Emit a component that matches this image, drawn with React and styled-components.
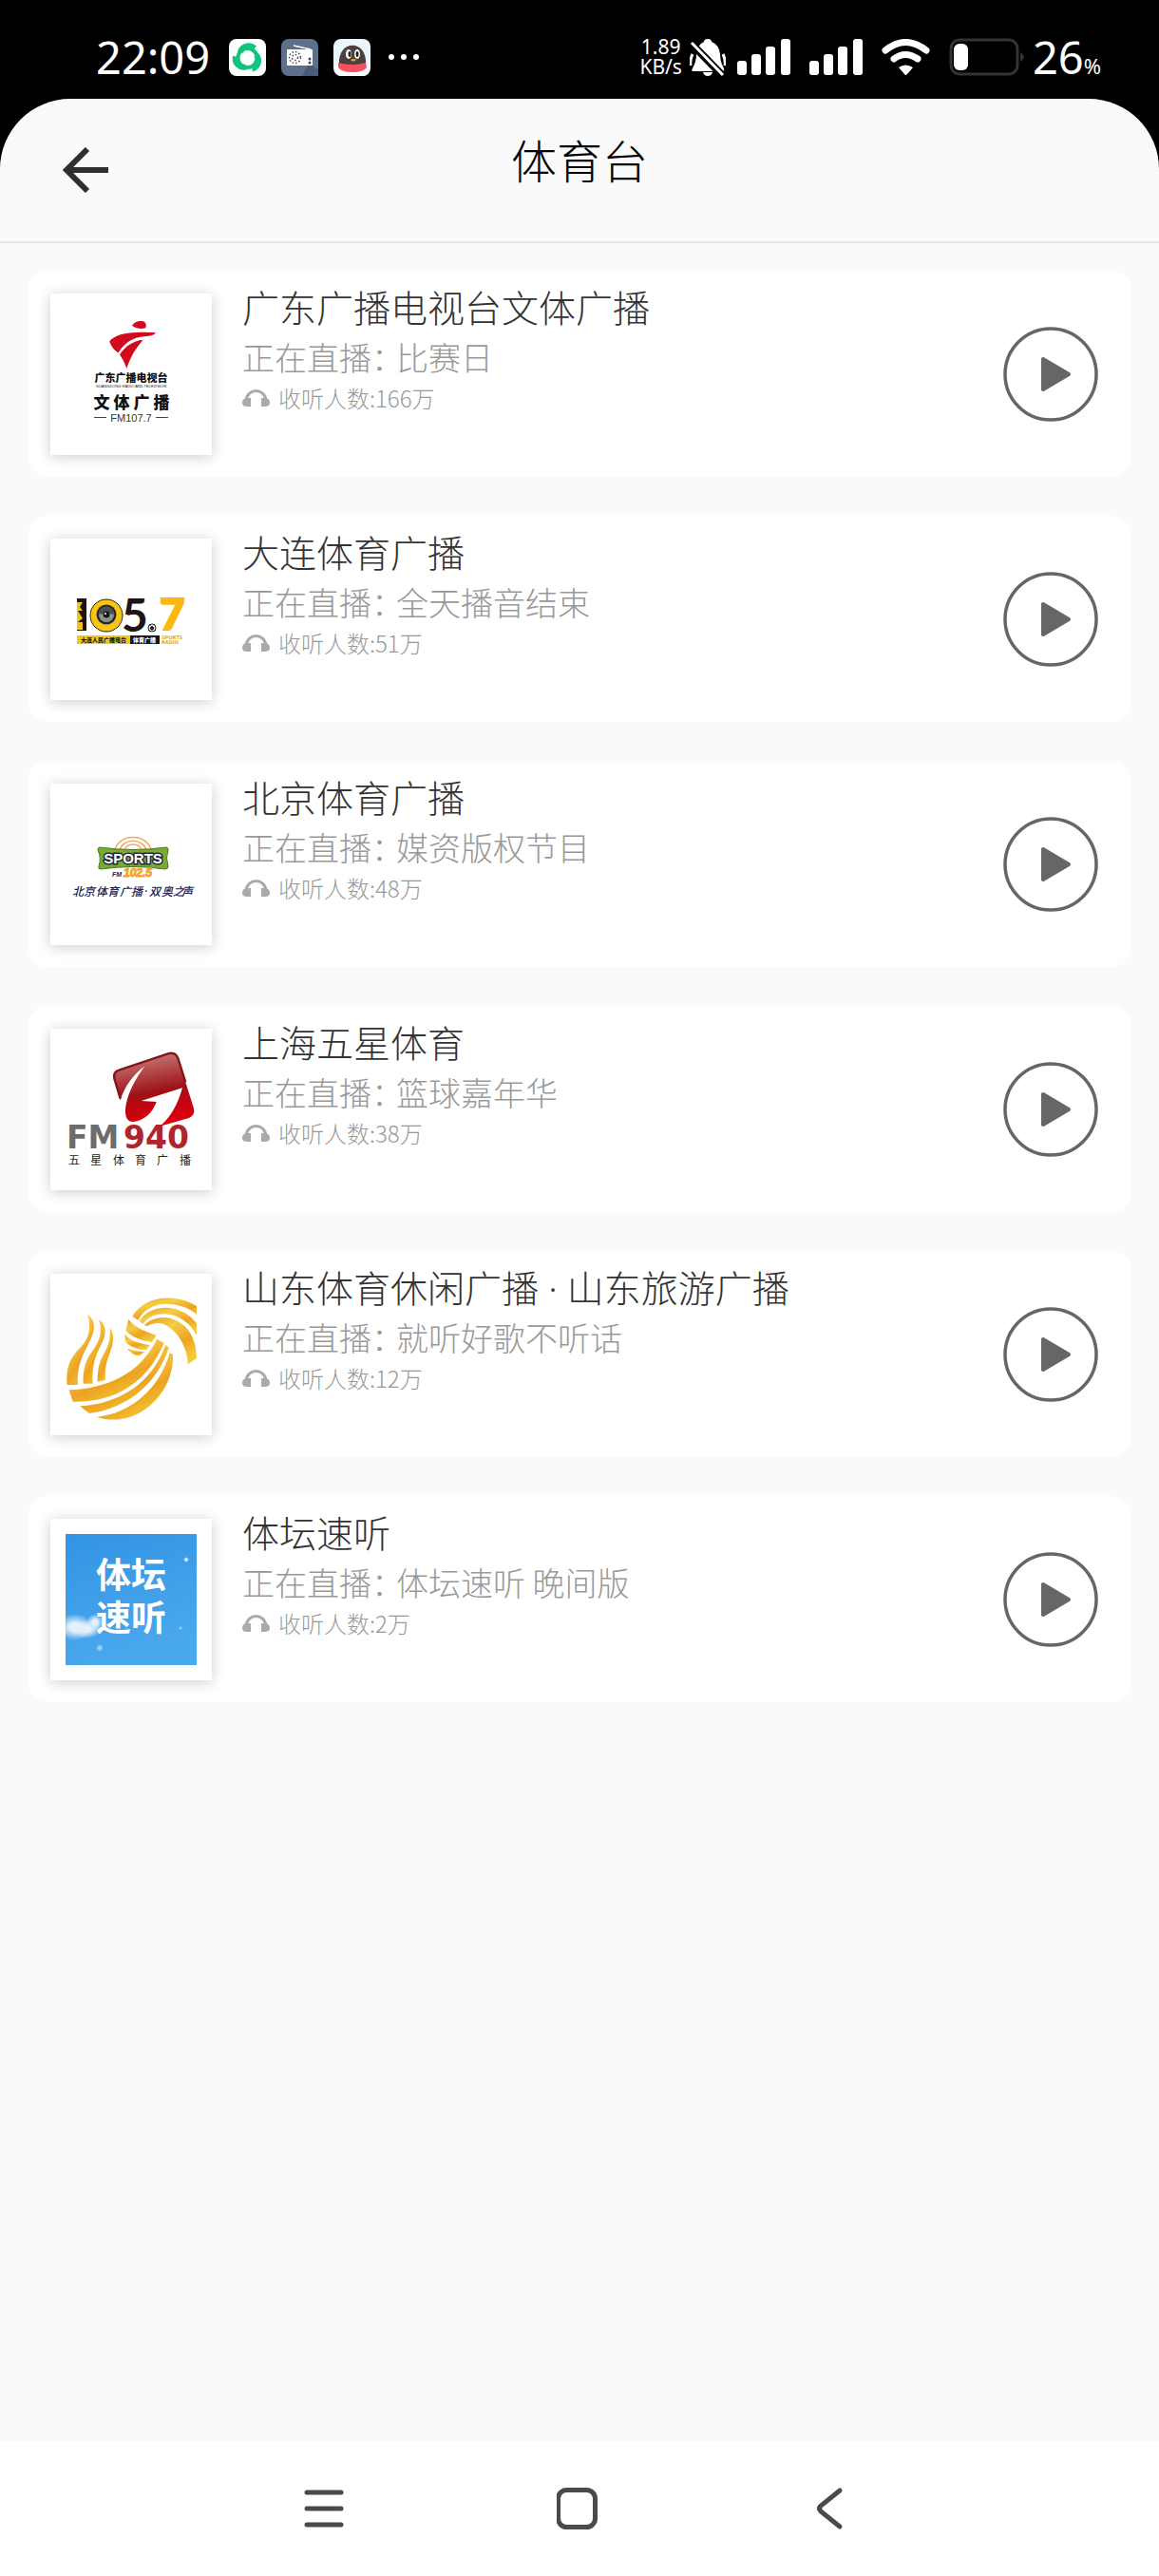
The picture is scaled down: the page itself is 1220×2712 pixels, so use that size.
import React from 'react';
import styled, { createGlobalStyle } from 'styled-components';

const CJK = "'Noto Sans CJK SC', sans-serif";

const GuangdongLogo = () => (
  <svg viewBox="0 0 170 170">
    <g transform="translate(-23 -19) scale(0.3333)" fill="#d20a1e">
      <path d="M327,158 C334,146 350,141 362,145 C371,148 374,158 369,166 C356,170 340,168 327,158Z" />
      <path d="M256,208 C272,186 318,174 402,181 C398,188 386,192 366,193 C330,196 304,212 284,244 C272,238 260,224 256,208Z" />
      <path d="M362,203 C340,228 322,256 310,294 C304,276 296,262 288,250 C306,222 332,206 362,203Z" />
    </g>
    <g fill="#111" textAnchor="middle">
      <text x="85" y="93" fontSize="11" fontWeight="900">广东广播电视台</text>
      <text x="85" y="99" fontSize="4" fontFamily="Liberation Sans">GUANGDONG RADIO AND TELEVISION</text>
      <text x="54 75 96 117" y="121" fontSize="17" fontWeight="900">文体广播</text>
      <text x="85" y="135" fontSize="11" fontFamily="Liberation Sans" fill="#333">FM107.7</text>
    </g>
    <path d="M46,130.500H59M111,130.500H124" stroke="#444" />
  </svg>
);

const DalianLogo = () => (
  <svg viewBox="0 0 170 170">
    <rect x="28" y="63" width="10" height="34" fill="#1d1515" />
    <path d="M28,67H34L31,72L34,76H29L34,84L29,88H34V96H28Z" fill="#f2c318" />
    <circle cx="59" cy="81" r="17" fill="#f7c613" stroke="#2a2015" />
    <circle cx="59" cy="80" r="10.500" fill="#2b2b2b" />
    <circle cx="59" cy="80" r="8" fill="#8d9293" />
    <path d="M51,80A8,8 0 0 1 67,80L59,78Z" fill="#4b4f50" />
    <circle cx="59" cy="80" r="3.500" fill="#17181a" />
    <circle cx="58" cy="79" r="1" fill="#fff" />
    <text x="75" y="98" fontSize="48" fontWeight="700" fontFamily="Lato" fill="#1d1515">5</text>
    <circle cx="107" cy="94" r="4" fill="#fff" stroke="#222" />
    <path d="M107,92L109,94L108,96H106L105,94ZM104,91L106,91M110,91L108,90M103,96L105,98M111,96L109,98" fill="#222" stroke="#222" />
    <text x="115" y="96" fontSize="46" fontWeight="900" fontFamily="Lato" fill="#fbb80f" stroke="#fbb80f" strokeWidth="2">7</text>
    <rect x="28" y="102" width="56" height="9" fill="#f4c51c" />
    <rect x="84" y="102" width="31" height="9" fill="#1d1515" />
    <g fontWeight="900" fontSize="6">
      <text x="32" y="109" fill="#1d1515">大连人民广播电台</text>
      <text x="87" y="109" fill="#fff">体育广播</text>
    </g>
    <g fontWeight="700" fontSize="5" fontFamily="DejaVu Sans" fill="#d4ac22">
      <text x="117" y="106">SPORTS</text>
      <text x="117" y="111">RADIO</text>
    </g>
  </svg>
);

const BeijingLogo = () => (
  <svg viewBox="0 0 170 170">
    <g fill="none" stroke="#efaa5b">
      <path d="M68,70C72,52 102,52 106,70" strokeWidth="1.500" />
      <path d="M73,70C77,57 97,57 101,70" strokeWidth="1.500" />
      <path d="M78,70C81,62 93,62 96,70" strokeWidth="1.500" />
    </g>
    <path d="M52,67Q87,72 122,67Q124,67 124,70Q121,78 124,87Q124,90 121,90Q87,85 53,90Q50,90 51,87Q54,78 50,70Q50,67 52,67Z" fill="#78ab2f" stroke="#4f7224" />
    <text x="87" y="84" fontSize="15" fontWeight="700" fontFamily="Liberation Sans" textAnchor="middle" fill="#fff" stroke="#232a42" strokeWidth="3" paintOrder="stroke">SPORTS</text>
    <text x="65" y="98" fontSize="7" fontWeight="700" fontStyle="italic" fontFamily="Liberation Sans" fill="#2a2150">FM</text>
    <text x="77" y="98" fontSize="12" fontWeight="700" fontStyle="italic" fontFamily="Liberation Sans" fill="#f4a42c" stroke="#f4a42c">102.5</text>
    <text x="23 35 48 60 73 85 99 104 117 129 138" y="118" fontSize="12" fontStyle="italic" fontWeight="500" fontFamily="Noto Sans, Noto Sans CJK SC" fill="#25224f">北京体育广播·双奥之声</text>
  </svg>
);

const ShanghaiLogo = () => (
  <svg viewBox="0 0 170 170">
    <defs>
      <linearGradient id="fiveStar" x1="0.3" y1="0" x2="0.5" y2="1">
        <stop offset="0" stopColor="#c98080" />
        <stop offset="0.550" stopColor="#9d1216" />
        <stop offset="0.700" stopColor="#c00410" />
        <stop offset="1" stopColor="#dd0012" />
      </linearGradient>
    </defs>
    <g transform="translate(-23 -17) scale(0.3333)">
      <path
        d="M288,180 L440,129 Q464,122 472,144 L522,302 Q527,324 507,333 L415,359 C448,332 472,290 486,238 L356,279 L404,282 C392,318 362,342 332,345 C314,346 305,334 306,306 C310,262 334,214 367,169 C330,198 304,232 290,277 L270,208 Q265,187 288,180Z"
        fill="url(#fiveStar)"
      />
      <path d="M290,272 L271,208 Q266,187 288,181 L440,130 Q464,123 472,144 L496,220" fill="none" stroke="#82141a" strokeWidth="7" />
    </g>
    <g fontFamily="DejaVu Sans" fontSize="33" fontWeight="700">
      <text x="17" y="126" fill="#6d6d6d">FM</text>
      <text x="77" y="126" fill="#b0242e">940</text>
    </g>
    <text x="19 42 66 89 112 136" y="143" fontSize="12" fontWeight="400" fill="#222">五星体育广播</text>
  </svg>
);

const ShandongLogo = () => (
  <svg viewBox="0 0 170 170">
    <defs>
      <linearGradient id="gold" x1="0" y1="0" x2="0.6" y2="1">
        <stop offset="0" stopColor="#e79a1f" />
        <stop offset="0.350" stopColor="#f6cd45" />
        <stop offset="0.700" stopColor="#eda322" />
        <stop offset="1" stopColor="#f3ca35" />
      </linearGradient>
    </defs>
    <g transform="translate(-23 -17) scale(0.3333)" fill="url(#gold)">
      <path d="M187,180 C200,190 208,202 207,222 C203,270 150,310 156,402 L122,402 C117,350 130,318 165,283 C190,256 200,225 187,180Z" />
      <path d="M222,195 C240,208 246,225 240,250 C230,285 198,312 203,398 L173,398 C172,350 180,322 205,290 C226,262 234,232 222,195Z" />
      <path d="M257,222 C268,237 270,256 264,280 C255,312 240,330 243,386 L218,392 C217,350 225,325 240,300 C255,275 260,250 257,222Z" />
      <path d="M128,418 C240,414 350,372 406,257 L428,270 C375,395 275,458 140,455 Z" />
      <path d="M433,276 L443,284 C410,390 320,475 192,492 L162,469 C290,462 390,395 433,276Z" />
      <path d="M446,300 L456,306 C458,370 430,430 380,470 C330,512 270,520 215,504 C330,490 415,410 446,300Z" />
      <path d="M316,195 C335,220 370,235 403,245 L390,267 C355,262 325,250 307,230 Z" />
      <path d="M304,243 C320,262 350,272 383,276 L372,291 C345,292 318,280 307,266Z" />
      <path d="M312,287 C330,293 345,296 366,298 L352,310 C338,310 322,302 312,287Z" />
      <path d="M328,186 C350,145 400,125 450,128 C485,130 510,140 531,153 L531,180 C500,150 440,138 400,152 C375,160 357,175 347,198 Z" />
      <path d="M350,200 C370,170 400,157 440,158 C480,162 510,180 531,208 L531,245 C510,205 470,178 430,178 C400,178 375,190 362,210 Z" />
      <path d="M366,213 C385,195 410,187 440,190 C490,200 530,240 531,318 L504,336 C500,280 470,225 420,208 C400,205 385,210 375,217Z" />
    </g>
  </svg>
);

const TitanLogo = () => (
  <svg viewBox="0 0 170 170">
    <defs>
      <linearGradient id="sky" x1="0" y1="0" x2="0.3" y2="1">
        <stop offset="0" stopColor="#3294e4" />
        <stop offset="1" stopColor="#4aa8ec" />
      </linearGradient>
      <radialGradient id="puff">
        <stop offset="0.300" stopColor="#e4f1fb" />
        <stop offset="1" stopColor="#e4f1fb" stopOpacity="0" />
      </radialGradient>
      <clipPath id="skyBox">
        <rect x="16" y="16" width="138" height="138" />
      </clipPath>
    </defs>
    <rect x="16" y="16" width="138" height="138" fill="url(#sky)" />
    <g clipPath="url(#skyBox)" fill="url(#puff)">
      <ellipse cx="26" cy="114" rx="19" ry="14" />
      <ellipse cx="38" cy="116" rx="16" ry="10" />
      <ellipse cx="47" cy="109" rx="9" ry="9" />
      <circle cx="52" cy="136" r="4" opacity="0.6" />
      <circle cx="143" cy="43" r="3" />
      <circle cx="137" cy="115" r="2" opacity="0.6" />
    </g>
    <g fontSize="37" fontWeight="700" fill="#fff">
      <text x="48" y="73">体坛</text>
      <text x="48" y="118">速听</text>
    </g>
  </svg>
);

const stations = [
  { name: '广东广播电视台文体广播', live: '比赛日', count: '166万', logo: <GuangdongLogo /> },
  { name: '大连体育广播', live: '全天播音结束', count: '51万', logo: <DalianLogo /> },
  { name: '北京体育广播', live: '媒资版权节目', count: '48万', logo: <BeijingLogo /> },
  { name: '上海五星体育', live: '篮球嘉年华', count: '38万', logo: <ShanghaiLogo /> },
  { name: '山东体育休闲广播 · 山东旅游广播', live: '就听好歌不听话', count: '12万', logo: <ShandongLogo /> },
  { name: '体坛速听', live: '体坛速听 晚间版', count: '2万', logo: <TitanLogo /> },
];

const Signal = () => (
  <svg width="56" height="38" viewBox="0 0 56 38" fill="#fff">
    <rect x="0" y="23" width="10" height="15" rx="3" />
    <rect x="15" y="16" width="10" height="22" rx="3" />
    <rect x="30" y="8" width="10" height="30" rx="3" />
    <rect x="46" y="0" width="10" height="38" rx="3" />
  </svg>
);

const StatusBar = () => (
  <StatusWrap>
    <Clock>22:09</Clock>
    <AppIcons>
      <svg width="39" height="39" viewBox="0 0 39 39">
        <rect width="39" height="39" rx="8" fill="#fff" />
        <g fill="none" stroke="#0fc47c" strokeWidth="6">
          <path d="M12,14A9,9 0 0 1 27,10" />
          <path d="M12,14A9,9 0 0 1 27,10" transform="rotate(120 19.500 20)" />
          <path d="M12,14A9,9 0 0 1 27,10" transform="rotate(240 19.500 20)" />
          <circle cx="19.500" cy="20" r="10" strokeWidth="4" />
        </g>
      </svg>
      <svg width="39" height="39" viewBox="0 0 39 39">
        <rect width="39" height="39" rx="8" fill="#5e6f8b" />
        <path d="M33,28L39,34V39H22L28,28Z" fill="#4b5b75" />
        <path d="M13,7L31,11" stroke="#fff" strokeWidth="1.500" />
        <rect x="6" y="11" width="27" height="17" rx="1" fill="#fff" />
        <circle cx="14.500" cy="19.500" r="6" fill="none" stroke="#3f4654" strokeWidth="1.500" strokeDasharray="1.500 2" />
        <circle cx="14.500" cy="19.500" r="3" fill="none" stroke="#3f4654" strokeWidth="1.500" strokeDasharray="1.500 2" />
        <circle cx="30" cy="21" r="1.500" fill="#3f4654" />
        <circle cx="30" cy="25" r="1.500" fill="#3f4654" />
      </svg>
      <svg width="39" height="39" viewBox="0 0 39 39">
        <rect width="39" height="39" rx="8" fill="#e9f7fb" />
        <path d="M2,28H37V32Q36,39 31,39H8Q3,39 2,32Z" fill="#fff" />
        <path d="M6,27C4,0 36,0 34,27Z" fill="#4b403e" />
        <path d="M5,25Q20,29 34,25L35,30Q32,35 20,35Q8,35 5,30Z" fill="#f4505f" />
        <ellipse cx="16" cy="16" rx="3" ry="5" fill="#fff" />
        <ellipse cx="25" cy="16" rx="3" ry="5" fill="#fff" />
        <ellipse cx="17" cy="16" rx="1.500" ry="3" fill="#222" />
        <ellipse cx="25" cy="16" rx="1.500" ry="3" fill="#222" />
        <path d="M18,22Q21,20 24,22Q21,25 18,22Z" fill="#f7a21c" />
      </svg>
    </AppIcons>
    <svg width="33" height="8" viewBox="0 0 33 8" fill="#fff">
      <circle cx="4" cy="4" r="3" />
      <circle cx="17" cy="4" r="3" />
      <circle cx="30" cy="4" r="3" />
    </svg>
    <Spacer />
    <Speed>
      <span>1.89</span>
      <span>KB/s</span>
    </Speed>
    <Icons>
      <svg width="38" height="39" viewBox="0 0 38 39">
        <path d="M19,0Q23,0 23,3Q31,6 32,16Q32,24 36,31Q37,34 34,34H4Q1,34 3,31Q7,24 7,16Q8,6 15,3Q15,0 19,0Z" fill="#fff" />
        <path d="M14,35H24Q23,39 19,39Q15,39 14,35Z" fill="#fff" />
        <path d="M3,16Q0,22 1,28M35,16Q38,22 37,28" stroke="#fff" strokeWidth="3" fill="none" />
        <path d="M1,4L36,40" stroke="#000" strokeWidth="8" />
        <path d="M2,4L35,38" stroke="#fff" strokeWidth="3" />
      </svg>
      <Signal />
      <WideIcon>
        <Signal />
      </WideIcon>
      <WideIcon>
        <svg width="51" height="38" viewBox="0 0 51 38">
          <g fill="none" stroke="#fff" strokeWidth="7" strokeLinecap="round">
            <path d="M4,12Q25,-5 47,12" />
            <path d="M13,21Q25,12 38,21" />
          </g>
          <path d="M18,30Q25,25 33,30L27,37Q25,39 24,37Z" fill="#fff" />
        </svg>
      </WideIcon>
      <WideIcon>
        <svg width="80" height="40" viewBox="0 0 80 40">
          <rect x="2" y="2" width="70" height="36" rx="9" fill="none" stroke="#333" strokeWidth="3" />
          <rect x="5" y="6" width="15" height="28" rx="6" fill="#fff" />
          <path d="M75,15Q79,18 79,20Q79,22 75,25Z" fill="#333" />
        </svg>
      </WideIcon>
    </Icons>
    <Battery>
      26<small>%</small>
    </Battery>
  </StatusWrap>
);

const Station = ({ station }) => {
  const { name, live, count, logo } = station;

  return (
    <Card>
      <Cover>{logo}</Cover>
      <Info>
        <Name>{name}</Name>
        <Live>
          <span>正在直播：</span>
          {live}
        </Live>
        <Listeners>
          <svg width="29" height="19" viewBox="0 0 29 19">
            <path d="M4,12C5,-2 24,-2 25,12" fill="none" stroke="#aaa" strokeWidth="3" />
            <path d="M9,9V18H5Q0,18 0,14Q0,9 6,9ZM20,9V18H24Q29,18 29,14Q29,9 23,9Z" fill="#aaa" />
          </svg>
          收听人数:{count}
        </Listeners>
      </Info>
      <PlayButton type="button" aria-label={`播放 ${name}`}>
        <svg width="100" height="100" viewBox="0 0 100 100">
          <circle cx="50" cy="50" r="48" fill="none" stroke="#666" strokeWidth="3.500" />
          <path d="M42,34L69,50L42,66Z" fill="#666" stroke="#666" strokeWidth="4" strokeLinejoin="round" />
        </svg>
      </PlayButton>
    </Card>
  );
};

const App = () => {
  return (
    <Phone>
      <GlobalStyle />
      <StatusBar />
      <Screen>
        <Header>
          <IconButton type="button" aria-label="返回">
            <svg width="48" height="48" viewBox="0 0 48 48" fill="none" stroke="#2f2f2f" strokeWidth="6">
              <path d="M48,24H5" />
              <path d="M26,2L4,24L26,46" />
            </svg>
          </IconButton>
          <Title>体育台</Title>
        </Header>
        <List>
          {stations.map((station) => (
            <Station key={station.name} station={station} />
          ))}
        </List>
      </Screen>
      <NavBar>
        <IconButton type="button" aria-label="最近任务">
          <svg width="48" height="48" viewBox="0 0 48 48" stroke="#4a4a4a" strokeWidth="5" strokeLinecap="round">
            <path d="M3,7H39M3,24H39M3,41H39" />
          </svg>
        </IconButton>
        <IconButton type="button" aria-label="主屏幕">
          <svg width="48" height="48" viewBox="0 0 48 48" fill="none" stroke="#4a4a4a" strokeWidth="5">
            <rect x="1.500" y="4.500" width="39" height="39" rx="9" />
          </svg>
        </IconButton>
        <IconButton type="button" aria-label="后退">
          <svg width="48" height="48" viewBox="0 0 48 48" fill="none" stroke="#4a4a4a" strokeWidth="5" strokeLinecap="round">
            <path d="M32,5L12,21Q9,24 12,27L32,43" />
          </svg>
        </IconButton>
      </NavBar>
    </Phone>
  );
};

export default App;

const GlobalStyle = createGlobalStyle`
  * {
    box-sizing: border-box;
  }

  body {
    margin: 0;
    font-family: ${CJK};
    font-weight: 300;
    background-color: #000;
  }

  svg {
    display: block;
    flex-shrink: 0;
  }
`;

const Phone = styled.div`
  display: flex;
  flex-direction: column;
  min-height: 100vh;
`;

const StatusWrap = styled.div`
  display: flex;
  align-items: center;
  height: 104px;
  padding: 16px 61px 0 101px;
  color: #fff;
  font-family: 'Noto Sans', sans-serif;
  font-weight: 400;
`;

const Clock = styled.time`
  width: 140px;
  font-size: 47px;
  line-height: 48px;
`;

const AppIcons = styled.div`
  display: flex;
  gap: 16px;
  margin-right: 18px;
`;

const Spacer = styled.div`
  flex: 1;
`;

const Speed = styled.div`
  display: flex;
  flex-direction: column;
  align-items: center;
  margin-right: 8px;
  font-size: 21px;
  line-height: 21px;
`;

const Icons = styled.div`
  display: flex;
  align-items: center;
  gap: 12px;
`;

const WideIcon = styled.div`
  margin-left: 8px;
`;

const Battery = styled.div`
  margin-left: 8px;
  font-size: 47px;
  line-height: 48px;

  small {
    font-size: 22px;
    line-height: 22px;
  }
`;

const Screen = styled.main`
  flex: 1;
  border-radius: 74px 74px 0 0;
  background-color: #fafafa;
`;

const Header = styled.header`
  display: grid;
  grid-template-columns: 48px 1fr 48px;
  align-items: center;
  height: 152px;
  padding: 0 66px;
  border-bottom: 2px solid #e5e5e5;
`;

const Title = styled.h1`
  margin: 0;
  padding-bottom: 24px;
  text-align: center;
  font-size: 48px;
  font-weight: 300;
  line-height: 56px;
  color: #000;
`;

const IconButton = styled.button`
  padding: 0;
  border: none;
  background: none;
`;

const List = styled.ul`
  display: flex;
  flex-direction: column;
  gap: 41px;
  margin: 0;
  padding: 29px 30px;
  list-style: none;
`;

const Card = styled.li`
  display: flex;
  height: 217px;
  padding-right: 34px;
  border-radius: 20px;
  background-color: #fff;
`;

const Cover = styled.div`
  flex-shrink: 0;
  align-self: center;
  width: 170px;
  height: 170px;
  margin: 0 32px 0 23px;
  background-color: #fff;
  box-shadow: 0 2px 14px rgba(0, 0, 0, 0.2);
`;

const Info = styled.div`
  flex: 1;
  min-width: 0;
  padding-top: 15px;
`;

const Name = styled.h2`
  margin: 0;
  font-family: 'Noto Sans', ${CJK};
  font-size: 39px;
  font-weight: 300;
  line-height: 48px;
  color: #333;
`;

const Live = styled.p`
  margin: 6px 0 5px;
  font-size: 34px;
  line-height: 44px;
  color: #999;

  span {
    margin-right: -8px;
  }
`;

const Listeners = styled.p`
  display: flex;
  align-items: center;
  gap: 9px;
  margin: 0;
  font-size: 24px;
  line-height: 32px;
  color: #999;
`;

const PlayButton = styled.button`
  align-self: center;
  padding: 0;
  border: none;
  border-radius: 50%;
  background: none;
`;

const NavBar = styled.nav`
  display: flex;
  justify-content: center;
  gap: 218px;
  height: 142px;
  background-color: #fff;
`;
